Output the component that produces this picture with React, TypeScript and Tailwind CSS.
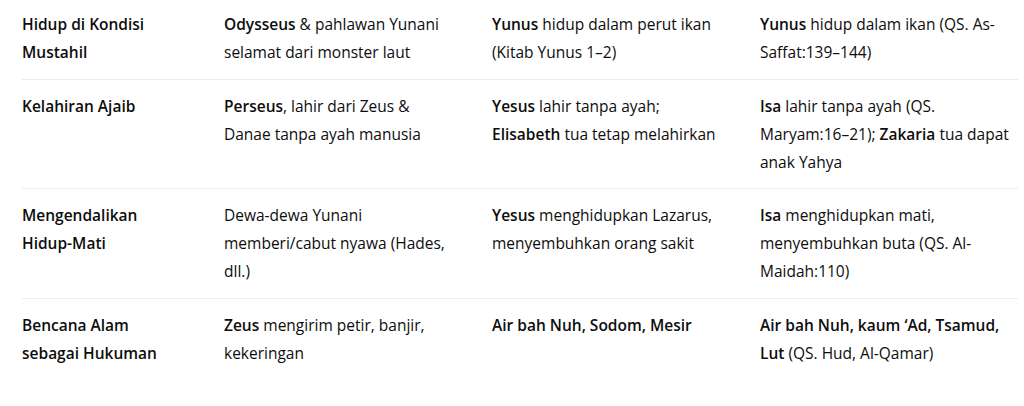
type Seg = { b?: boolean; t: string };
type Line = Seg[];

const rows: Line[][][] = [
  [
    [[{ b: true, t: 'Hidup di Kondisi' }], [{ b: true, t: 'Mustahil' }]],
    [[{ b: true, t: 'Odysseus' }, { t: ' & pahlawan Yunani' }], [{ t: 'selamat dari monster laut' }]],
    [[{ b: true, t: 'Yunus' }, { t: ' hidup dalam perut ikan' }], [{ t: '(Kitab Yunus 1–2)' }]],
    [[{ b: true, t: 'Yunus' }, { t: ' hidup dalam ikan (QS. As-' }], [{ t: 'Saffat:139–144)' }]],
  ],
  [
    [[{ b: true, t: 'Kelahiran Ajaib' }]],
    [[{ b: true, t: 'Perseus' }, { t: ', lahir dari Zeus &' }], [{ t: 'Danae tanpa ayah manusia' }]],
    [[{ b: true, t: 'Yesus' }, { t: ' lahir tanpa ayah;' }], [{ b: true, t: 'Elisabeth' }, { t: ' tua tetap melahirkan' }]],
    [
      [{ b: true, t: 'Isa' }, { t: ' lahir tanpa ayah (QS.' }],
      [{ t: 'Maryam:16–21); ' }, { b: true, t: 'Zakaria' }, { t: ' tua dapat' }],
      [{ t: 'anak Yahya' }],
    ],
  ],
  [
    [[{ b: true, t: 'Mengendalikan' }], [{ b: true, t: 'Hidup-Mati' }]],
    [[{ t: 'Dewa-dewa Yunani' }], [{ t: 'memberi/cabut nyawa (Hades,' }], [{ t: 'dll.)' }]],
    [[{ b: true, t: 'Yesus' }, { t: ' menghidupkan Lazarus,' }], [{ t: 'menyembuhkan orang sakit' }]],
    [[{ b: true, t: 'Isa' }, { t: ' menghidupkan mati,' }], [{ t: 'menyembuhkan buta (QS. Al-' }], [{ t: 'Maidah:110)' }]],
  ],
  [
    [[{ b: true, t: 'Bencana Alam' }], [{ b: true, t: 'sebagai Hukuman' }]],
    [[{ b: true, t: 'Zeus' }, { t: ' mengirim petir, banjir,' }], [{ t: 'kekeringan' }]],
    [[{ b: true, t: 'Air bah Nuh, Sodom, Mesir' }]],
    [[{ b: true, t: 'Air bah Nuh, kaum ‘Ad, Tsamud,' }], [{ b: true, t: 'Lut' }, { t: ' (QS. Hud, Al-Qamar)' }]],
  ],
];

// per-row padding, nudged to line up with the screenshot
const pad = ['pt-[10px] pb-[13px]', 'pt-3 pb-3', 'pt-3 pb-[13px]', 'pt-3 pb-3'];

function Cell({ lines }: { lines: Line[] }) {
  return (
    <>
      {lines.map((line, i) => (
        <div key={i} className="whitespace-pre">
          {line.map((s, j) =>
            s.b ? (
              <strong key={j} className="font-semibold">
                {s.t}
              </strong>
            ) : (
              <span key={j}>{s.t}</span>
            )
          )}
        </div>
      ))}
    </>
  );
}

export default function App() {
  return (
    <div className="min-h-[406px] bg-white pl-[22px] text-[15.5px] leading-7 text-[#0d0d0d] [font-family:'Open_Sans',sans-serif]">
      <table className="w-[996px] table-fixed border-collapse">
        <colgroup>
          <col className="w-[202px]" />
          <col className="w-[268px]" />
          <col className="w-[268px]" />
          <col className="w-[258px]" />
        </colgroup>
        <tbody>
          {rows.map((row, r) => (
            <tr key={r} className={r < rows.length - 1 ? 'border-b border-[#ececec]' : ''}>
              {row.map((cell, c) => (
                <td key={c} className={`align-top ${pad[r]}`}>
                  <Cell lines={cell} />
                </td>
              ))}
            </tr>
          ))}
        </tbody>
      </table>
    </div>
  );
}
